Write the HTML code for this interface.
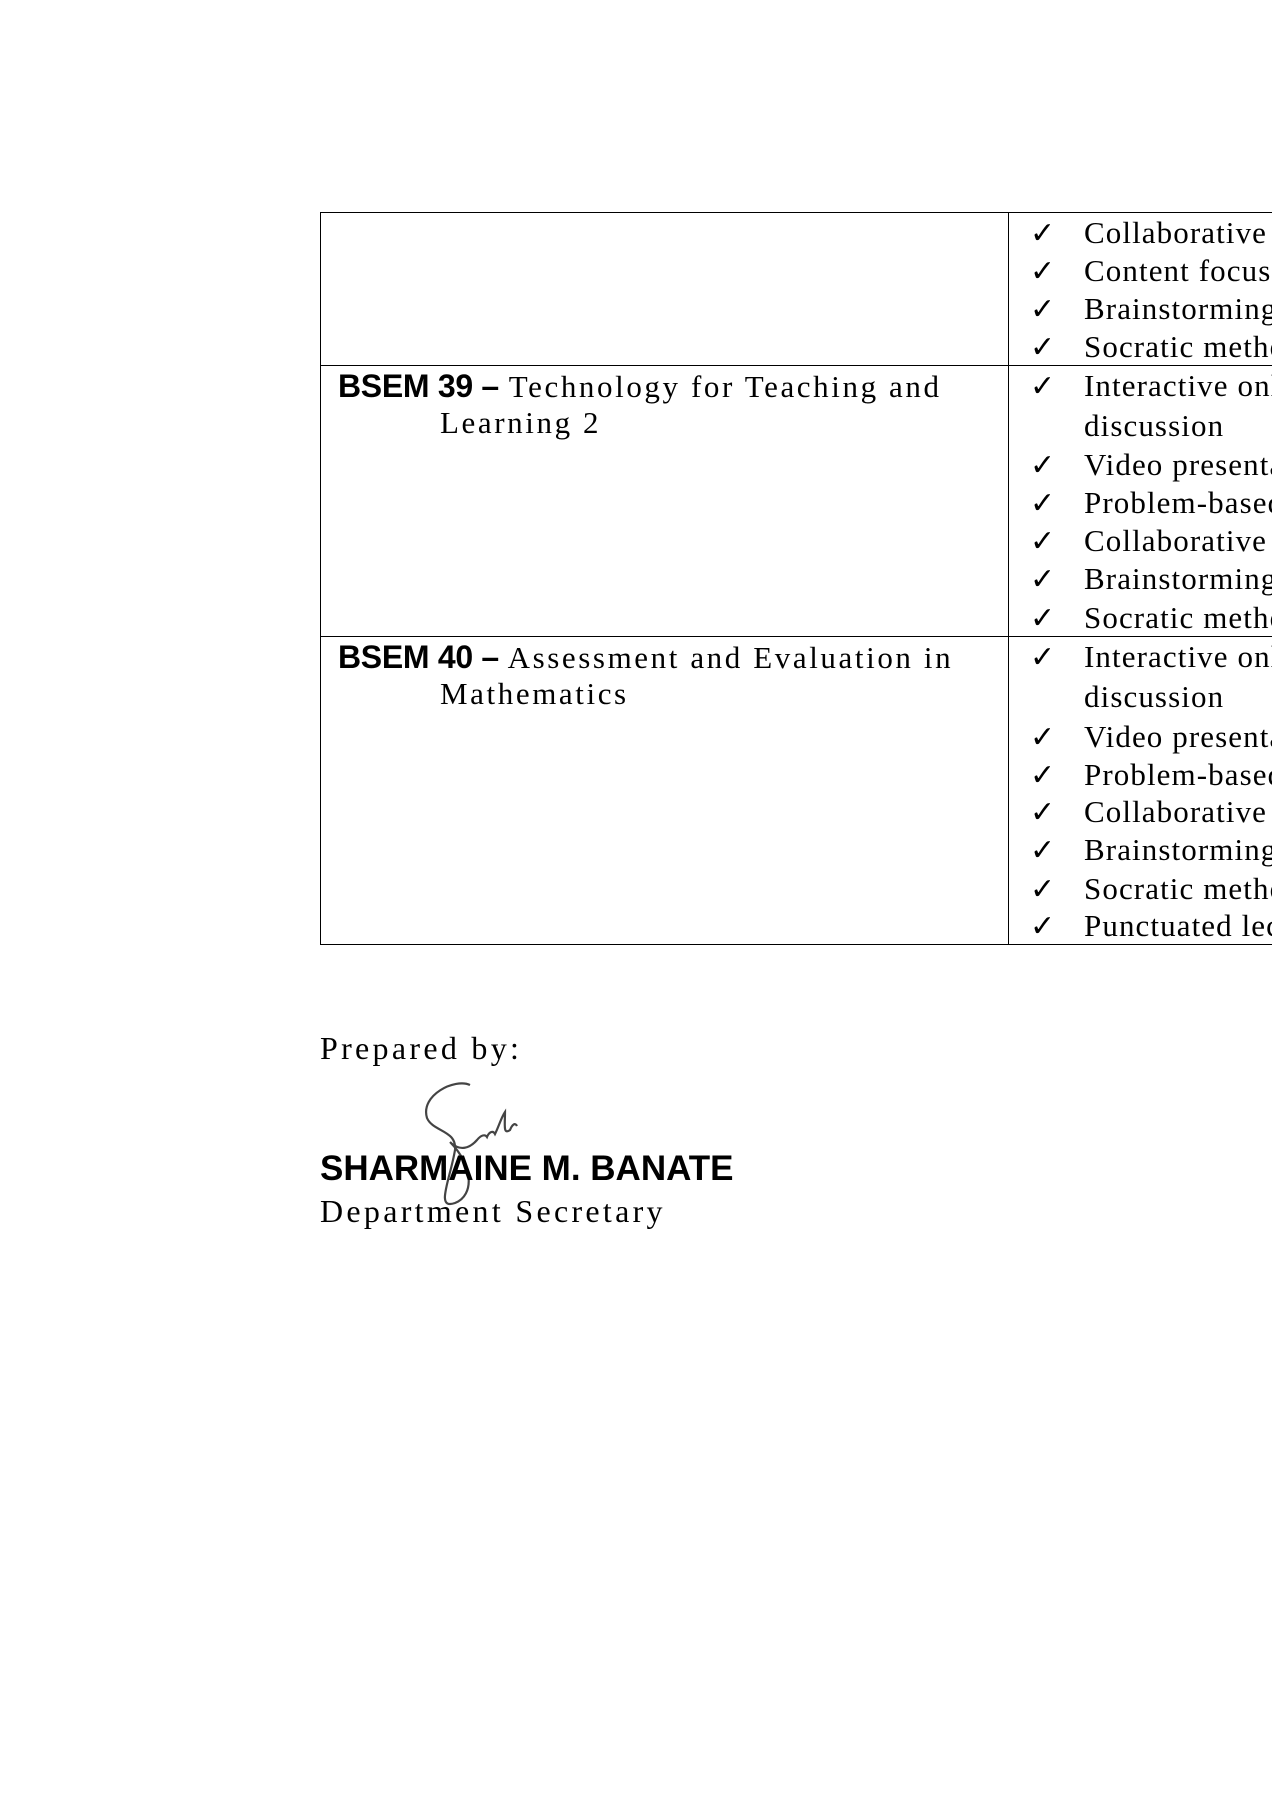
<!DOCTYPE html>
<html><head><meta charset="utf-8"><style>
html,body{margin:0;padding:0;background:#fff;overflow:hidden;width:1272px;height:1800px;}
body{position:relative;font-family:"Liberation Serif",serif;color:#000;}
.clip{position:absolute;left:0;top:0;width:1272px;height:1800px;overflow:hidden;}
.t{position:absolute;white-space:nowrap;font-size:31px;letter-spacing:1.1px;line-height:38px;}
.l{letter-spacing:2.6px;}
.b{font-family:"Liberation Sans",sans-serif;font-weight:bold;letter-spacing:-0.3px;font-size:32px;}
.line{position:absolute;background:#000;}
.ck{position:absolute;font-size:30px;line-height:38px;font-family:"DejaVu Sans",sans-serif;}
</style></head><body><div class="clip">
<div class="line" style="left:320px;top:212px;width:952px;height:1px"></div>
<div class="line" style="left:320px;top:365px;width:952px;height:1px"></div>
<div class="line" style="left:320px;top:636px;width:952px;height:1px"></div>
<div class="line" style="left:320px;top:944px;width:952px;height:1px"></div>
<div class="line" style="left:320px;top:212px;width:1px;height:733px"></div>
<div class="line" style="left:1008px;top:212px;width:1px;height:733px"></div>

<div class="t l" style="left:338px;top:367px"><span class="b">BSEM 39 –</span> Technology for Teaching and</div>
<div class="t l" style="left:440px;top:404px">Learning 2</div>
<div class="t l" style="left:338px;top:638px"><span class="b">BSEM 40 –</span> Assessment and Evaluation in</div>
<div class="t l" style="left:440px;top:675px">Mathematics</div>

<div id="items" style="position:absolute;left:0;top:0;width:1272px;height:1800px;overflow:hidden"></div>
<script>
var it=[[233,"Collaborative"],[271,"Content focus"],[309,"Brainstorming"],[347,"Socratic method"],
[386,"Interactive online"],[426,null,"discussion"],[465,"Video presentation"],[503,"Problem-based"],[541,"Collaborative"],[579,"Brainstorming"],[618,"Socratic method"],
[657,"Interactive online"],[697,null,"discussion"],[737,"Video presentation"],[775,"Problem-based"],[812,"Collaborative"],[850,"Brainstorming"],[889,"Socratic method"],[926,"Punctuated lecture"]];
var h="";
it.forEach(function(a){var y=a[0]-19;
if(a[1]){h+='<div class="ck" style="left:1030px;top:'+(y+1)+'px">✓</div><div class="t" style="left:1084px;top:'+y+'px">'+a[1]+'</div>';}
else h+='<div class="t" style="left:1084px;top:'+y+'px">'+a[2]+'</div>';});
document.getElementById("items").innerHTML=h;
</script>

<div class="t" style="left:320px;top:1028px;font-size:32px;letter-spacing:3.3px;line-height:40px">Prepared by:</div>
<svg style="position:absolute;left:415px;top:1080px" width="120" height="135" viewBox="0 0 120 135">
<path d="M55 5 C40 -2 5 15 12 38 C18 52 42 50 40 70 C35 100 20 130 40 123 C60 115 58 85 35 62 C45 72 55 68 62 60 C66 55 70 54 72 57 C74 52 78 50 80 54 C84 46 86 38 90 32 C90 45 88 55 95 50 C97 45 100 42 102 46" fill="none" stroke="#444" stroke-width="2.2"/>
</svg>
<div class="t b" style="left:320px;top:1149px;font-size:35px;letter-spacing:0;line-height:40px">SHARMAINE M. BANATE</div>
<div class="t" style="left:320px;top:1191px;font-size:32px;letter-spacing:3.3px;line-height:40px">Department Secretary</div>
</div></body></html>
